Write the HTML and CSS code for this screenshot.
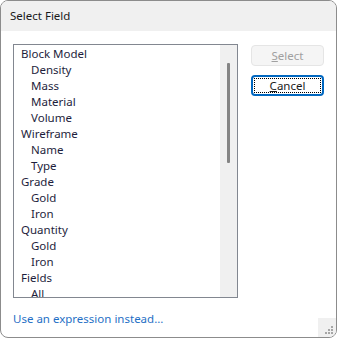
FILE: index.html
```html
<!DOCTYPE html>
<html lang="en">
<head>
    <meta charset="UTF-8">
    <title>Select Field</title>
    <link rel="stylesheet" href="styles.css">
</head>
<body>
    <div class="dialog">
        <div class="title-bar">Select Field</div>

        <div class="dialog-body">
            <div class="main-row">
                <div class="field-list">
                    <ul class="items">
                        <li class="group">Block Model</li>
                        <li class="child">Density</li>
                        <li class="child">Mass</li>
                        <li class="child">Material</li>
                        <li class="child">Volume</li>
                        <li class="group">Wireframe</li>
                        <li class="child">Name</li>
                        <li class="child">Type</li>
                        <li class="group">Grade</li>
                        <li class="child">Gold</li>
                        <li class="child">Iron</li>
                        <li class="group">Quantity</li>
                        <li class="child">Gold</li>
                        <li class="child">Iron</li>
                        <li class="group">Fields</li>
                        <li class="child">All</li>
                    </ul>
                    <div class="scrollbar">
                        <div class="thumb"></div>
                    </div>
                </div>

                <div class="buttons">
                    <button class="btn" disabled><u>S</u>elect</button>
                    <button class="btn btn-focus"><span class="focus-ring"><u>C</u>ancel</span></button>
                </div>
            </div>

            <a class="expr-link" href="#">Use an expression instead...</a>
        </div>

        <div class="grip">
            <svg width="10" height="10" viewBox="0 0 10 10">
                <rect x="7" y="1" width="2" height="2" fill="#a6a6a6"/>
                <rect x="4" y="4" width="2" height="2" fill="#a6a6a6"/>
                <rect x="7" y="4" width="2" height="2" fill="#a6a6a6"/>
                <rect x="1" y="7" width="2" height="2" fill="#a6a6a6"/>
                <rect x="4" y="7" width="2" height="2" fill="#a6a6a6"/>
                <rect x="7" y="7" width="2" height="2" fill="#a6a6a6"/>
            </svg>
        </div>
    </div>
</body>
</html>
```

FILE: styles.css
```css
body {
    margin: 0;
    padding: 0;
    background-color: #ffffff;
    font-family: 'Noto Sans', 'Open Sans', sans-serif;
    font-size: 11.5px;
    color: #1a1a2e;
}

.dialog {
    position: relative;
    width: 337px;
    height: 338px;
    box-sizing: border-box;
    border: 1px solid #8c8c8c;
    border-radius: 8px;
    overflow: hidden;
    background-color: #ffffff;
}

.title-bar {
    height: 30px;
    line-height: 30px;
    padding-left: 9px;
    background-color: #f0f0f0;
    color: #1a1a1a;
}

.dialog-body {
    padding: 13px 12px 0 12px;
}

.main-row {
    display: flex;
    gap: 13px;
}

.field-list {
    display: flex;
    width: 225px;
    height: 254px;
    box-sizing: border-box;
    border: 1px solid #828790;
    overflow: hidden;
}

.items {
    flex: 1;
    list-style: none;
    margin: 0;
    padding: 1px 0 0 0;
    color: #1e1e3c;
}

.items li {
    height: 16px;
    line-height: 16px;
    white-space: nowrap;
}

.items .group {
    padding-left: 7px;
}

.items .child {
    padding-left: 17px;
}

.scrollbar {
    width: 17px;
    background-color: #f0f0f0;
    display: flex;
    justify-content: center;
    padding-top: 18px;
}

.thumb {
    width: 3px;
    height: 100px;
    background-color: #858585;
    border-radius: 1px;
    margin-left: -1px;
}

.buttons {
    display: flex;
    flex-direction: column;
    gap: 9px;
    padding-top: 1px;
}

.btn {
    width: 73px;
    height: 21px;
    box-sizing: border-box;
    padding: 0;
    font-family: inherit;
    font-size: 11.5px;
    color: #1a1a1a;
    background-color: #fdfdfd;
    border: 1px solid #d0d0d0;
    border-radius: 4px;
}

.btn[disabled] {
    color: #a0a0a0;
    background-color: #f5f5f5;
    border-color: #e5e5e5;
}

.btn-focus {
    border: 2px solid #0067c0;
    background-color: #ffffff;
    padding: 1px;
}

.focus-ring {
    display: block;
    height: 100%;
    box-sizing: border-box;
    border: 1px dotted #000000;
    line-height: 13px;
}

.expr-link {
    display: inline-block;
    margin-top: 13px;
    color: #1f6fc5;
    text-decoration: none;
}

.grip {
    position: absolute;
    right: 0;
    bottom: 0;
    width: 18px;
    height: 19px;
    background-color: #f0f0f0;
    display: flex;
    align-items: flex-end;
    justify-content: flex-end;
}

.grip svg {
    display: block;
    margin: 0 2px 2px 0;
}
```
